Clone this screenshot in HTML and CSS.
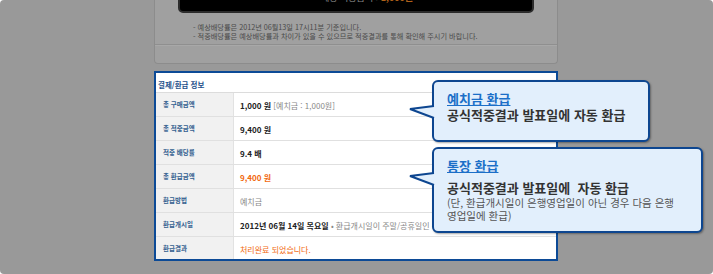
FILE: index.html
```html
<!DOCTYPE html>
<html lang="ko">
<head>
    <meta charset="UTF-8">
    <meta name="viewport" content="width=device-width, initial-scale=1.0">
    <title>결제/환급 정보</title>
    <link rel="stylesheet" href="styles.css">
</head>
<body>
    <div class="frame">
        <div class="dim-panel">
            <div class="black-box">
                <span class="black-label">예상 적중금액 :</span> <span class="black-amount">1,000원</span>
            </div>
            <div class="notes">
                <p>- 예상배당률은 2012년 06월13일 17시11분 기준입니다.</p>
                <p>- 적중배당률은 예상배당률과 차이가 있을 수 있으므로 적중결과를 통해 확인해 주시기 바랍니다.</p>
            </div>
            <div class="panel-foot"></div>
        </div>

        <div class="pay-box">
            <div class="pay-title">결제/환급 정보</div>
            <div class="pay-row">
                <div class="pay-label">총 구매금액</div>
                <div class="pay-value"><b>1,000 원</b> <span class="muted">[예치금 : 1,000원]</span></div>
            </div>
            <div class="pay-row">
                <div class="pay-label">총 적중금액</div>
                <div class="pay-value"><b>9,400 원</b></div>
            </div>
            <div class="pay-row">
                <div class="pay-label">적중 배당률</div>
                <div class="pay-value"><b>9.4 배</b></div>
            </div>
            <div class="pay-row">
                <div class="pay-label">총 환급금액</div>
                <div class="pay-value"><b class="orange">9,400 원</b></div>
            </div>
            <div class="pay-row">
                <div class="pay-label">환급방법</div>
                <div class="pay-value"><span class="muted">예치금</span></div>
            </div>
            <div class="pay-row">
                <div class="pay-label">환급개시일</div>
                <div class="pay-value"><b>2012년 06월 14일 목요일</b> <span class="muted">• 환급개시일이 주말/공휴일인 경우</span></div>
            </div>
            <div class="pay-row last">
                <div class="pay-label">환급결과</div>
                <div class="pay-value"><span class="orange">처리완료 되었습니다.</span></div>
            </div>
        </div>

        <div class="callout callout-deposit">
            <svg class="callout-tail" width="27" height="18" viewBox="0 0 27 18">
                <polygon points="1,6 24,3 27,3 27,15 24,15" fill="#e2effc"/>
                <polyline points="25,3 1,6 25,15" fill="none" stroke="#0d4690" stroke-width="2" stroke-linejoin="miter"/>
            </svg>
            <a class="callout-title" href="#">예치금 환급</a>
            <p class="callout-main">공식적중결과 발표일에 자동 환급</p>
        </div>

        <div class="callout callout-bank">
            <svg class="callout-tail" width="27" height="18" viewBox="0 0 27 18">
                <polygon points="1,6 24,3 27,3 27,15 24,15" fill="#e2effc"/>
                <polyline points="25,3 1,6 25,15" fill="none" stroke="#0d4690" stroke-width="2" stroke-linejoin="miter"/>
            </svg>
            <a class="callout-title" href="#">통장 환급</a>
            <p class="callout-main spaced">공식적중결과 발표일에&nbsp; 자동 환급</p>
            <p class="callout-note">(단, 환급개시일이 은행영업일이 아닌 경우 다음 은행<br>영업일에 환급)</p>
        </div>
    </div>
</body>
</html>
```

FILE: styles.css
```css
body {
    margin: 0;
    background: #fff;
    font-family: "Noto Sans CJK KR", "Noto Sans", sans-serif;
}
.frame {
    position: relative;
    width: 713px;
    height: 274px;
    background: #999999;
    border-radius: 4px;
    overflow: hidden;
}
p {
    margin: 0;
}

/* dimmed panel at the top */
.dim-panel {
    box-sizing: border-box;
    width: 404px;
    height: 64px;
    margin-left: 154px;
    background: #a0a0a0;
    border: 1px solid #8c8c8c;
    border-top: none;
    border-radius: 0 0 4px 4px;
    overflow: hidden;
}
.black-box {
    box-sizing: border-box;
    width: 356px;
    height: 33px;
    margin: -20px 0 0 23px;
    padding: 10px 0 0 22px;
    background: #000;
    border: 2px solid #2c2c2c;
    border-radius: 5px;
    text-align: center;
    font-size: 9px;
    line-height: 12px;
    color: #8a8a8a;
}
.black-amount {
    color: #b0621a;
    font-weight: bold;
}
.notes {
    margin-top: 10px;
    padding-left: 38px;
    font-size: 7.2px;
    line-height: 8.5px;
    color: #4a4a4a;
    height: 21px;
}
.panel-foot {
    height: 11px;
    border-top: 1px solid #8f8f8f;
    box-shadow: inset 0 1px 0 #a8a8a8;
}

/* payment / refund box */
.pay-box {
    box-sizing: border-box;
    width: 404px;
    height: 190px;
    margin: 7px 0 0 154px;
    background: #fff;
    border: 2px solid #0c4a96;
}
.pay-title {
    box-sizing: border-box;
    height: 20px;
    padding: 7px 0 0 2px;
    font-size: 7.5px;
    line-height: 10px;
    font-weight: bold;
    color: #1d4f8a;
    border-bottom: 1px solid #dcdcdc;
}
.pay-row {
    box-sizing: border-box;
    display: grid;
    grid-template-columns: 78px 1fr;
    height: 24px;
    border-bottom: 1px solid #e0e0e0;
}
.pay-row.last {
    height: 22px;
    border-bottom: none;
}
.pay-label {
    background: #f1f1f1;
    border-right: 1px solid #e2e2e2;
    padding: 6px 0 0 7px;
    font-size: 6.5px;
    line-height: 10px;
    font-weight: bold;
    color: #33608f;
}
.pay-value {
    padding: 8px 0 0 6px;
    font-size: 8px;
    line-height: 10px;
    color: #222;
    white-space: nowrap;
    overflow: hidden;
}
.muted {
    color: #888;
    font-weight: normal;
}
.orange {
    color: #f26a10;
}

/* speech bubbles */
.callout {
    position: absolute;
    left: 432px;
    box-sizing: border-box;
    padding: 9px 0 0 13px;
    background: #e2effc;
    border: 2px solid #0d4690;
    border-radius: 6px;
    box-shadow: 1px 1px 2px rgba(0, 0, 0, 0.35);
    font-size: 13px;
    line-height: 16px;
}
.callout-deposit {
    top: 80px;
    width: 218px;
    height: 62px;
}
.callout-bank {
    top: 147px;
    width: 271px;
    height: 86px;
}
.callout-tail {
    position: absolute;
    left: -25px;
    top: 21px;
}
.callout-title {
    display: inline-block;
    color: #1b6fc8;
    font-weight: bold;
    text-decoration: underline;
}
.callout-main {
    color: #333;
    font-weight: bold;
}
.callout-main.spaced {
    margin-top: 6px;
}
.callout-note {
    margin-top: 1px;
    font-size: 10.5px;
    line-height: 12.5px;
    color: #555;
}
```
